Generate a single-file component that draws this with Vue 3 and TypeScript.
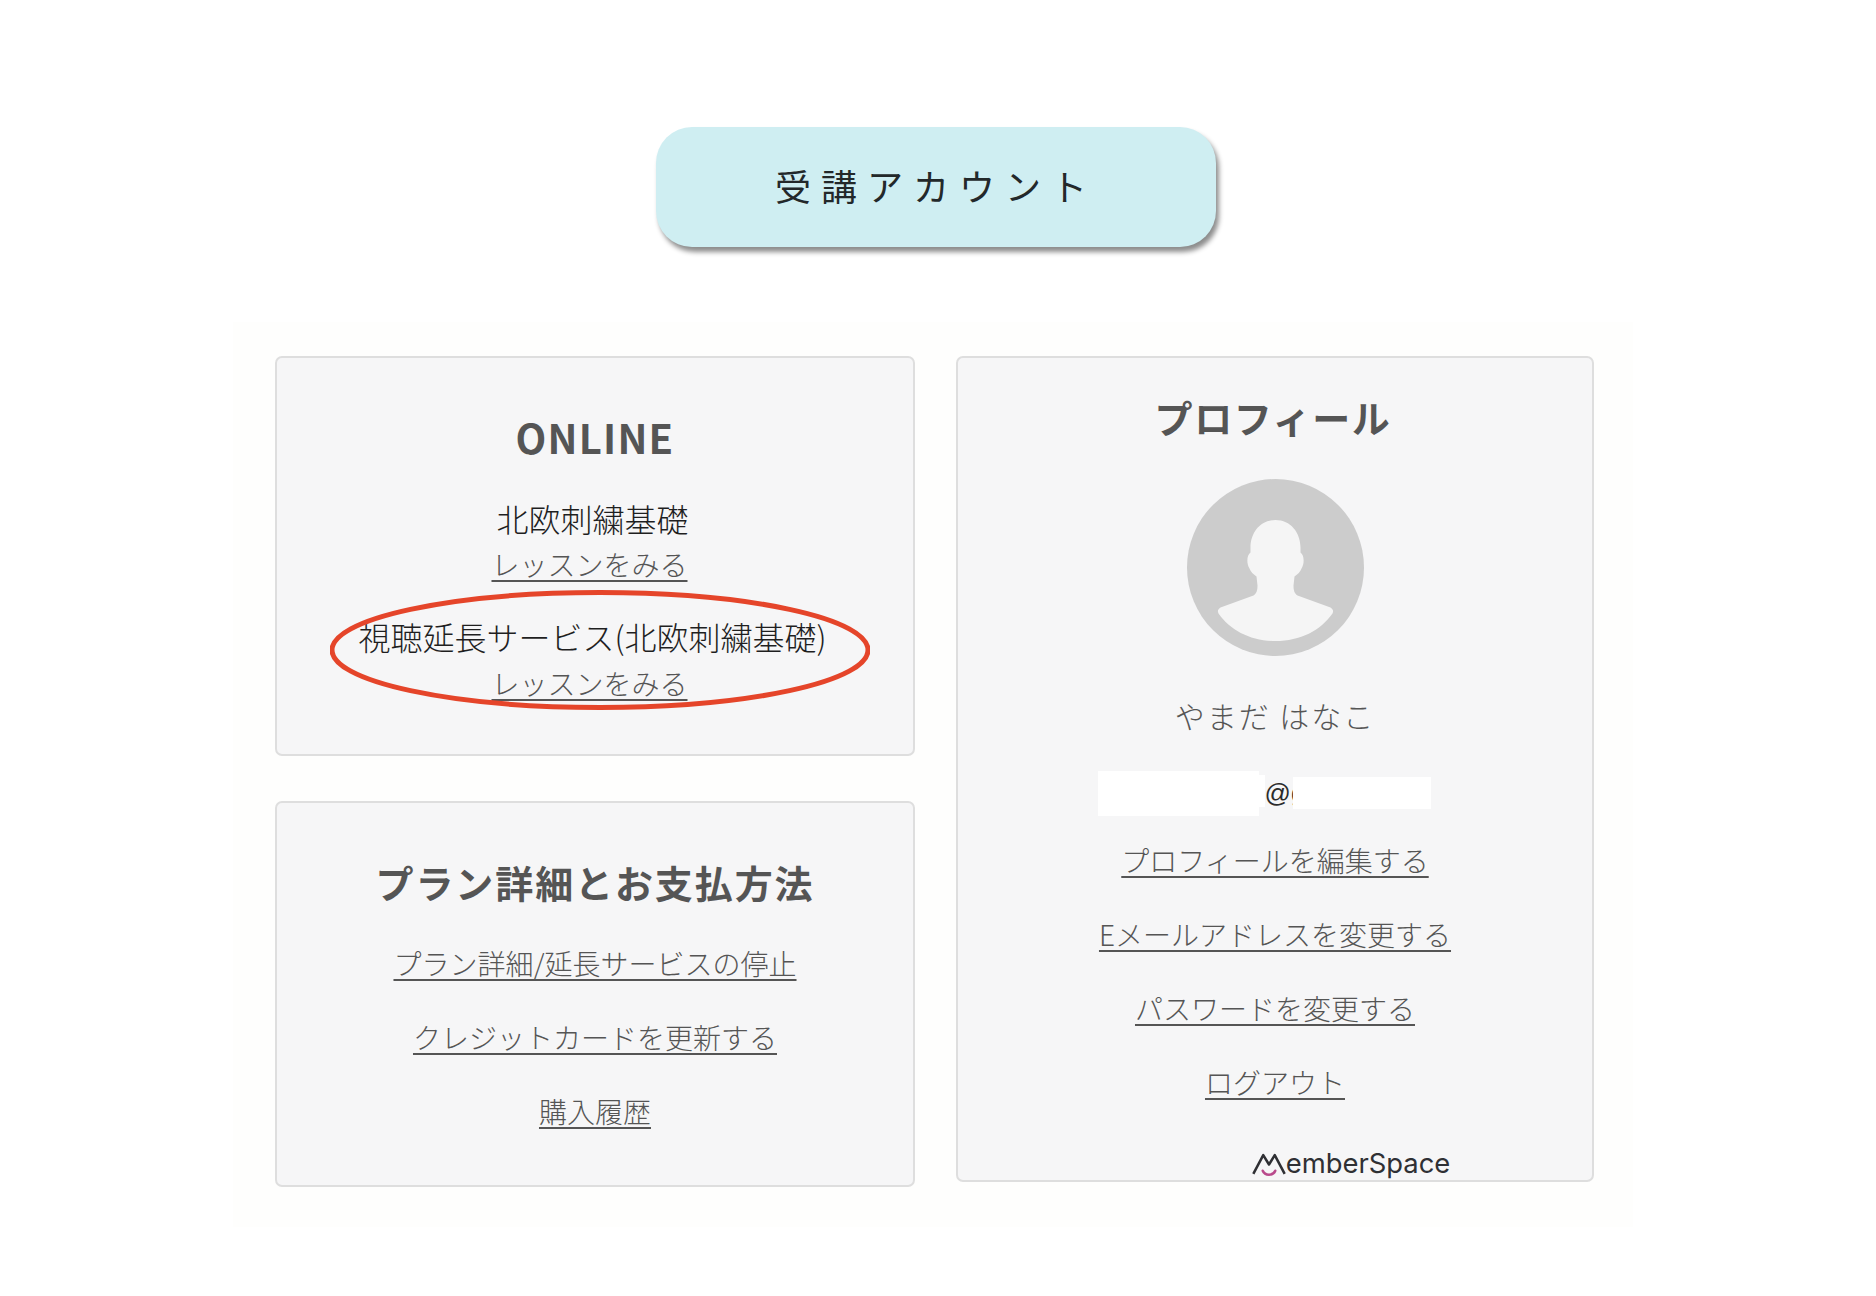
<script setup lang="ts">
const planLinks: string[] = ['プラン詳細/延長サービスの停止', 'クレジットカードを更新する', '購入履歴']
const profileLinks: string[] = ['プロフィールを編集する', 'Eメールアドレスを変更する', 'パスワードを変更する', 'ログアウト']
</script>

<template>
  <main class="page">
    <div class="hero">受講アカウント</div>
    <section class="panel">
      <div class="col">
        <article class="card online">
          <h2 class="title title-en">ONLINE</h2>
          <p class="name first shift-name">北欧刺繍基礎</p>
          <a class="link shift" href="#">レッスンをみる</a>
          <p class="name second shift-name">視聴延長サービス(北欧刺繍基礎)</p>
          <a class="link shift" href="#">レッスンをみる</a>
          <svg class="ring" viewBox="0 0 540 120" aria-hidden="true">
            <ellipse cx="270" cy="60" rx="268" ry="57.5" fill="none" stroke="#e5452a" stroke-width="5" />
          </svg>
        </article>
        <article class="card plan">
          <h2 class="title title-plan">プラン詳細とお支払方法</h2>
          <nav class="links">
            <a v-for="l in planLinks" :key="l" class="link" href="#">{{ l }}</a>
          </nav>
        </article>
      </div>
      <article class="card profile">
        <h2 class="title title-profile">プロフィール</h2>
        <svg class="avatar" viewBox="-88.5 -88.5 177 177" aria-hidden="true">
          <circle r="88.5" fill="#cccccc" />
          <path fill="#f5f5f5" d="M0 -47.5C-15 -47.5 -25 -35 -25 -20L-25 -15C-29 -12 -29 -4 -26 1C-25 4 -22 7 -19 9L-18 18C-18 23 -19 26 -22 28L-55 40C-58 42 -58 44 -57 46C-45 63 -25 73.5 0 73.5C25 73.5 45 63 57 46C58 44 58 42 55 40L22 28C19 26 18 23 18 18L19 9C22 7 25 4 26 1C29 -4 29 -12 25 -15L25 -20C25 -35 15 -47.5 0 -47.5Z" />
        </svg>
        <p class="person">やまだ はなこ</p>
        <div class="email">
          <span class="mask-a"></span>
          <span class="at">@g</span>
          <span class="mask-b"></span>
        </div>
        <nav class="links side">
          <a v-for="l in profileLinks" :key="l" class="link" href="#">{{ l }}</a>
        </nav>
        <div class="brand">
          <svg class="brand-m" viewBox="0 0 32 22" aria-hidden="true">
            <path d="M1 20L10.5 2L16 11L21.5 2L31 20" fill="none" stroke="#2f3034" stroke-width="2.4" stroke-linejoin="round" />
            <path d="M10 17C12 22 20 22 22 17" fill="none" stroke="#b94a8c" stroke-width="2.4" stroke-linecap="round" />
          </svg>
          <span class="brand-text">emberSpace</span>
        </div>
      </article>
    </section>
  </main>
</template>

<style scoped>
.page {
  min-height: 1296px;
  box-sizing: border-box;
  padding: 127px 0 0 233px;
  background: #ffffff;
  font-family: "Noto Sans CJK JP", "Noto Sans", sans-serif;
  color: #333;
}
.hero {
  width: 560px;
  height: 120px;
  box-sizing: border-box;
  padding-bottom: 4px;
  margin-left: 423px;
  border-radius: 36px;
  background: #cfeef2;
  box-shadow: 3px 5px 5px rgba(0, 0, 0, 0.45);
  display: flex;
  align-items: center;
  justify-content: center;
  font-size: 36px;
  letter-spacing: 10px;
  color: #23282a;
}
.panel {
  width: 1400px;
  box-sizing: border-box;
  margin-top: 75px;
  padding: 34px 0 40px 42px;
  background: #fefefd;
  display: flex;
  gap: 41px;
  align-items: flex-start;
}
.col {
  flex: none;
  width: 640px;
  display: flex;
  flex-direction: column;
  gap: 45px;
}
.card {
  position: relative;
  flex: none;
  box-sizing: border-box;
  width: 640px;
  border: 2px solid #dedede;
  border-radius: 7px;
  background: #f6f6f7;
  display: flex;
  flex-direction: column;
  align-items: center;
}
.online { height: 400px; padding-top: 54px; }
.plan { height: 386px; padding-top: 54px; }
.profile { width: 638px; height: 826px; padding-top: 34px; }
.title {
  margin: 0;
  font-size: 38px;
  line-height: 50px;
  font-weight: 700;
  letter-spacing: 1.6px;
  color: #555;
}
.title-plan { letter-spacing: 1.9px; }
.title-profile { margin-right: 4px; }
.title-en { font-size: 40px; font-weight: 700; letter-spacing: 1.2px; }
.name {
  margin: 0;
  font-size: 32px;
  line-height: 46px;
  font-weight: 300;
  color: #1f1f1f;
}
.shift-name { margin-right: 5px; }
.name.first { margin-top: 33px; }
.name.second { margin-top: 26px; margin-bottom: 1px; }
.link {
  font-size: 28px;
  line-height: 46px;
  font-weight: 300;
  color: #555;
  text-decoration: underline;
  text-underline-offset: 4px;
}
.shift { margin-right: 11px; }
.links {
  margin-top: 33px;
  display: flex;
  flex-direction: column;
  align-items: center;
  gap: 28px;
}
.links.side { margin-top: 24px; gap: 28px; }
.ring {
  position: absolute;
  left: 53px;
  top: 232px;
  width: 540px;
  height: 120px;
}
.avatar {
  display: block;
  width: 177px;
  height: 177px;
  margin-top: 37px;
}
.person {
  margin: 36px 0 0;
  font-size: 30px;
  line-height: 46px;
  font-weight: 300;
  letter-spacing: 2px;
  color: #555;
}
.email {
  margin-top: 35px;
  height: 40px;
  padding-right: 21px;
  display: flex;
  align-items: center;
}
.mask-a {
  position: relative;
  width: 161px;
  height: 45px;
  background: #fff;
}
.mask-a::after {
  content: "";
  position: absolute;
  left: 161px;
  top: 4px;
  width: 6px;
  height: 32px;
  background: #fff;
}
.at {
  margin-left: 6px;
  font-family: "Liberation Sans", sans-serif;
  font-size: 26px;
  line-height: 40px;
  color: #2b2b2b;
}
.mask-b {
  position: relative;
  width: 138px;
  height: 32px;
  margin-left: -12px;
  background: #fff;
}
.brand {
  margin-top: 45px;
  margin-left: 152px;
  display: flex;
  align-items: flex-end;
}
.brand-m {
  display: block;
  width: 34px;
  height: 23px;
}
.brand-text {
  font-family: "Inter", sans-serif;
  font-size: 27.4px;
  line-height: 26px;
  color: #2f3034;
}
</style>
